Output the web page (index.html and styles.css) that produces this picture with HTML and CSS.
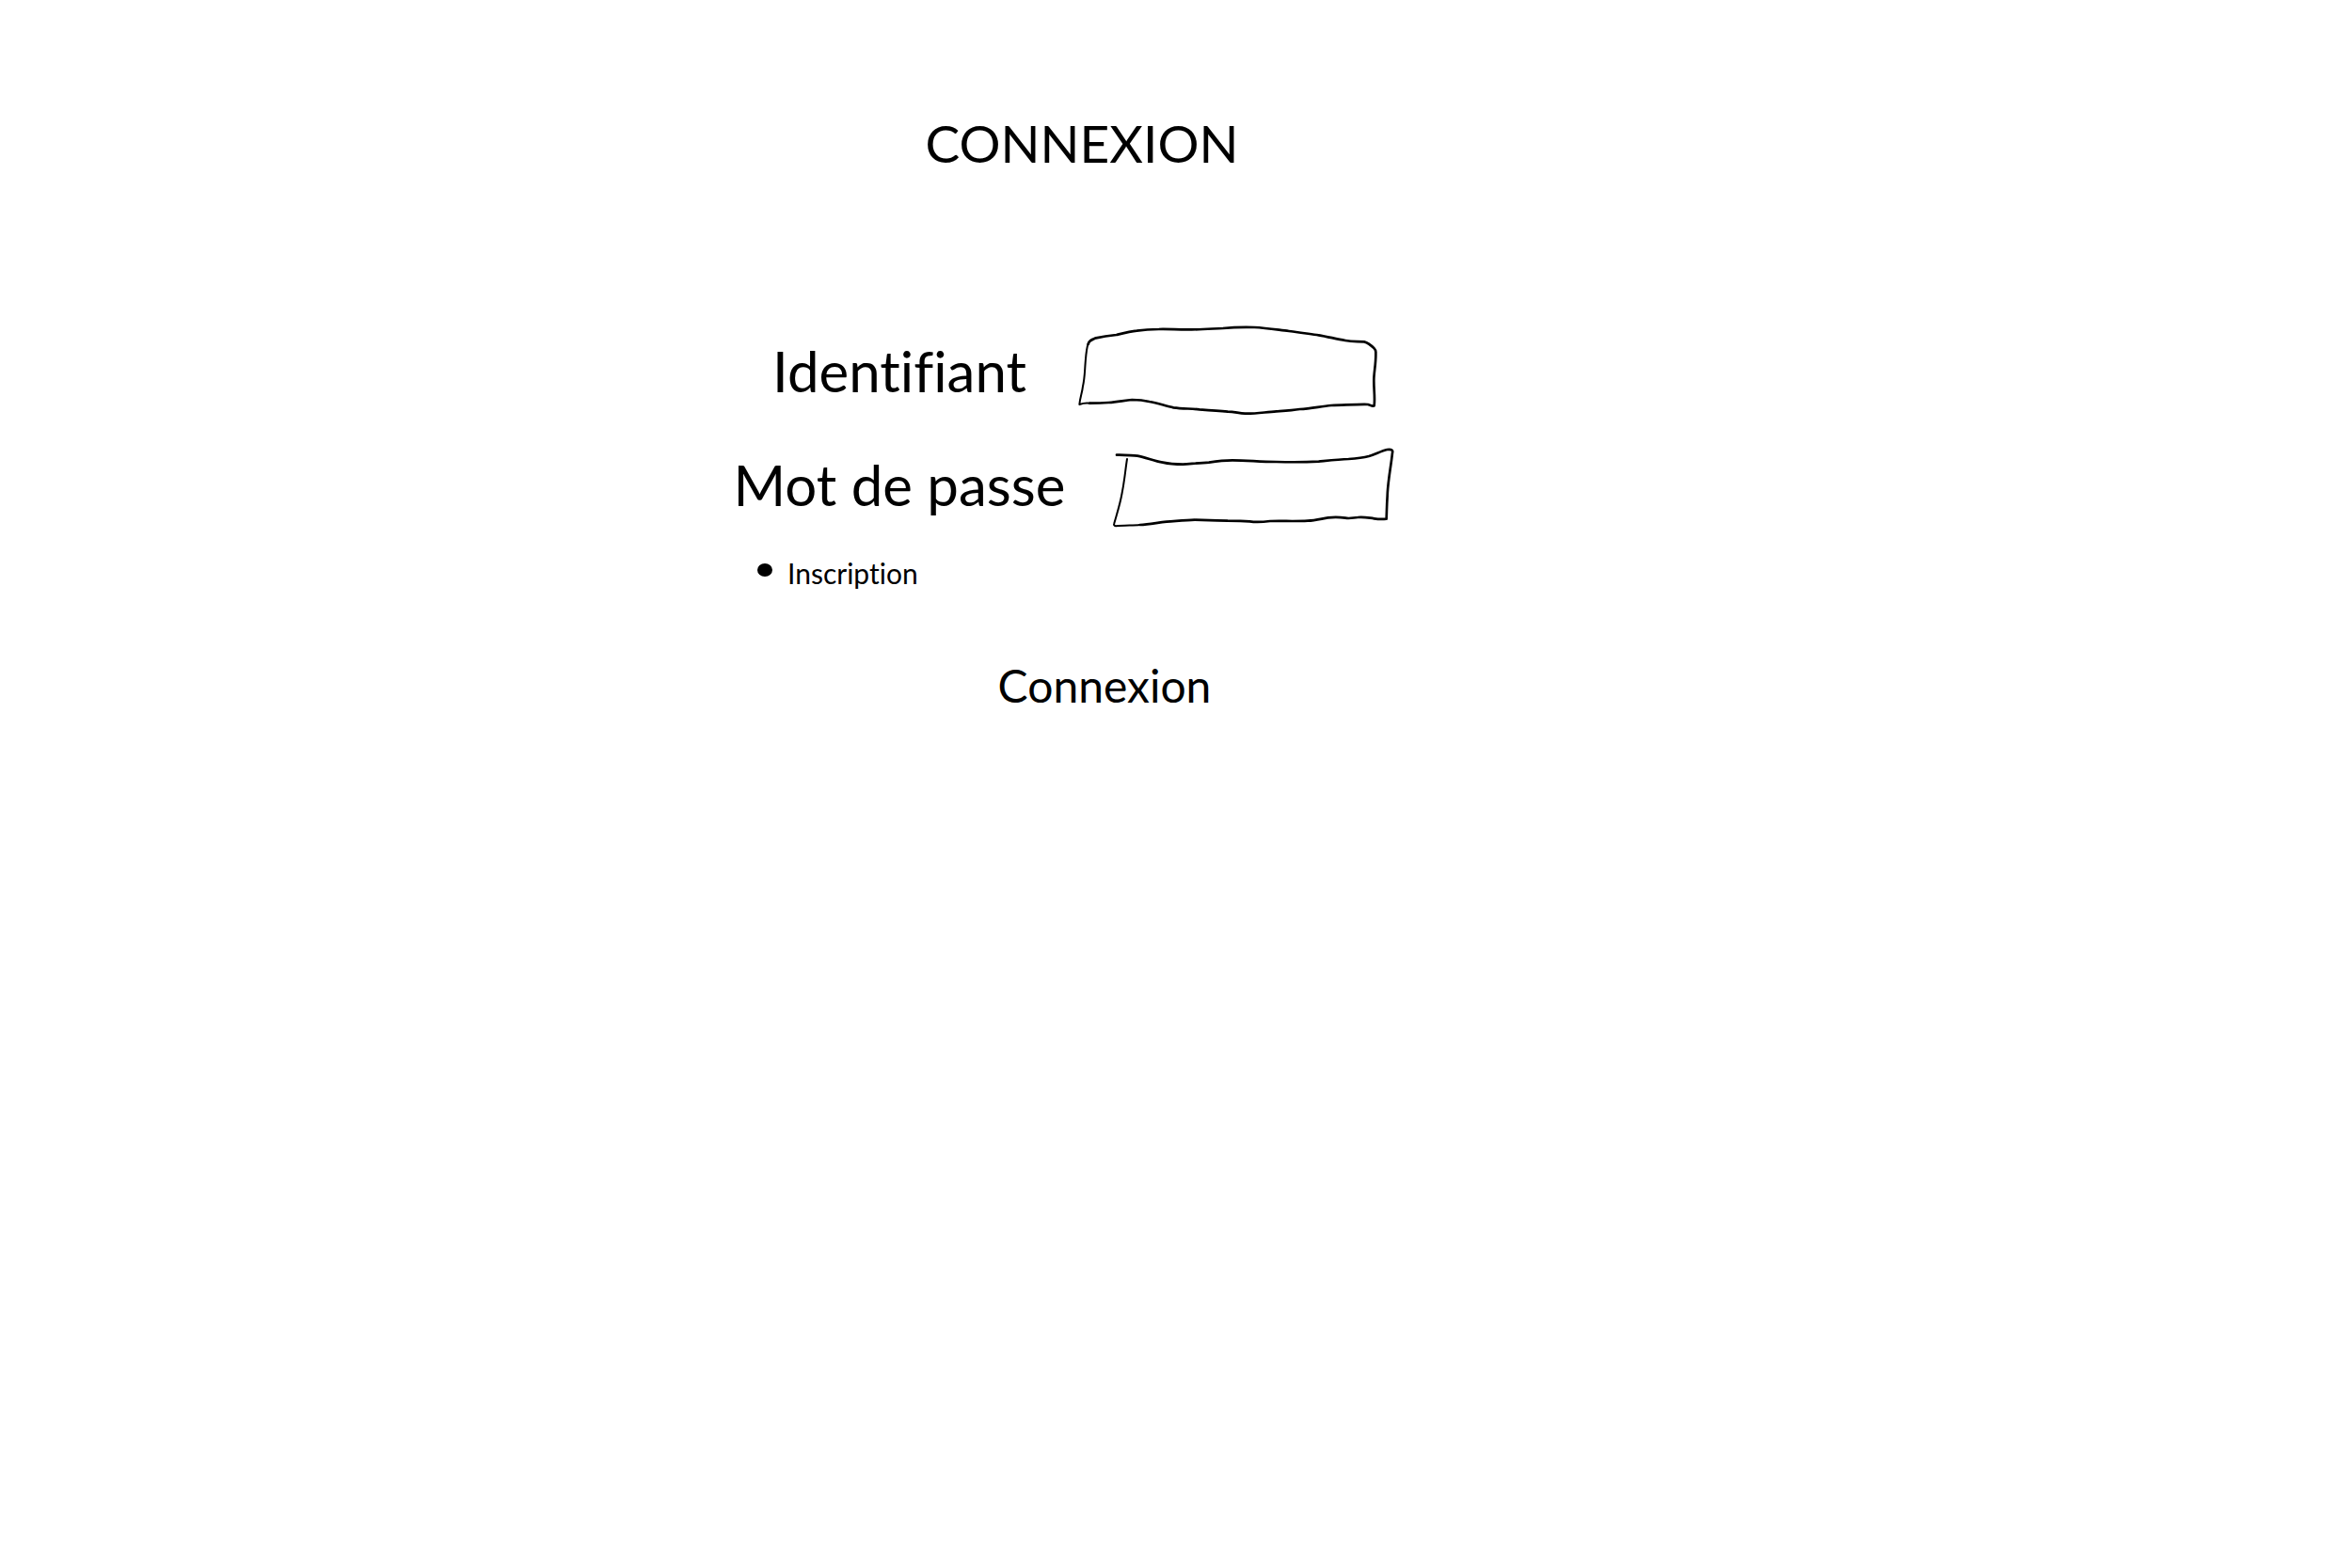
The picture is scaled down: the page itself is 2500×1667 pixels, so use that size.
FILE: index.html
```html
<!DOCTYPE html>
<html lang="fr">
<head>
  <meta charset="utf-8">
  <meta name="viewport" content="width=device-width, initial-scale=1">
  <title>Connexion</title>
  <link rel="stylesheet" href="styles.css">
</head>
<body>
  <main class="login">
    <h1 class="title">CONNEXION</h1>
    <form class="form">
      <div class="row">
        <label class="label" for="identifiant">Identifiant</label>
        <div class="field">
          <svg class="outline" viewBox="21 15 990 330" aria-hidden="true">
            <path stroke-width="8" d="M80 96C82 84 91 82 105 76C125 72 145 69 170 66C195 60 215 55 235 53C260 49 280 48 305 48C340 47 370 50 410 49C450 49 480 46 510 45C540 42 570 41 610 42C650 44 685 50 720 54C760 59 785 63 815 67C845 72 870 79 900 84C925 89 940 86 960 88C972 91 985 102 992 109Q998 115 997 124C998 160 990 190 991 215C991 245 995 265 992 292L987 293L972 288C940 287 900 290 855 291C820 294 790 302 755 303C730 307 710 308 680 310C645 312 615 318 580 317C560 316 545 311 525 311C495 308 465 306 435 304C405 301 380 302 352 298C325 292 300 283 275 279C255 274 240 273 220 273C195 275 175 280 145 282C120 284 100 284 85 284"/>
            <path stroke-width="6" d="M85 284Q68 282 52 288C54 265 61 250 63 230C69 205 69 180 71 155C73 130 74 110 80 94"/>
          </svg>
          <input class="input" id="identifiant" name="identifiant" type="text" autocomplete="username">
        </div>
      </div>
      <div class="row">
        <label class="label" for="motdepasse">Mot de passe</label>
        <div class="field field-inset">
          <svg class="outline" viewBox="81 0 960 306" aria-hidden="true">
            <path stroke-width="8" d="M111 59C135 58 155 61 177 62C205 67 230 79 258 83C280 88 300 89 322 89C350 87 380 84 405 83C430 79 450 76 480 76C530 76 565 81 620 81C665 82 710 82 755 80C785 77 820 73 850 72C880 70 900 67 915 63C935 57 955 46 973 42Q994 39 990 52C985 100 975 145 974 190C972 220 972 240 971 263Q952 265 932 262C910 259 900 256 880 258C865 259 855 263 840 260C820 257 805 257 785 259C765 262 745 268 720 269C680 271 640 269 600 270C575 273 555 274 535 271C510 269 490 269 465 269C430 268 400 267 360 266C330 267 300 270 270 272C240 275 215 281 185 282"/>
            <path stroke-width="6" d="M185 282C160 284 130 283 108 286Q100 284 103 277C112 245 122 215 128 180C136 140 138 110 144 72"/>
          </svg>
          <input class="input" id="motdepasse" name="motdepasse" type="password" autocomplete="current-password">
        </div>
      </div>
      <ul class="links">
        <li class="item"><a class="link" href="#inscription">Inscription</a></li>
      </ul>
      <button class="submit" type="submit">Connexion</button>
    </form>
  </main>
</body>
</html>
```
FILE: styles.css
```css
* {
  box-sizing: border-box;
}

body {
  margin: 0;
  background: #fff;
  color: #000;
  font-family: "Ink Free", Lato, sans-serif;
  font-variant-ligatures: none;
}

.login {
  max-width: 1525px;
  padding: 122px 0 64px 31%;
}

.login,
.form {
  display: flex;
  flex-direction: column;
}

.login {
  width: 61%;
  gap: 157px;
}

.title {
  margin: 0;
  font-size: 55px;
  font-weight: 400;
  line-height: 60px;
  text-align: center;
}

.form {
  gap: 15px;
}

.row {
  display: grid;
  grid-template-columns: 362px 1fr;
  align-items: center;
}

.label {
  font-size: 60px;
  line-height: 72px;
  text-align: center;
  white-space: nowrap;
}

.field {
  position: relative;
  display: flex;
  width: 330px;
  height: 110px;
  padding: 16px 20px 24px;
}

.field-inset {
  width: 320px;
  height: 102px;
  margin-left: 40px;
  padding: 32px 28px 20px;
}

/* Hand-drawn frame around the text box */
.outline {
  position: absolute;
  inset: 0;
  width: 100%;
  height: 100%;
  fill: none;
  stroke: #000;
  stroke-linecap: round;
  stroke-linejoin: round;
  pointer-events: none;
}

.input {
  width: 100%;
  padding: 0;
  border: 0;
  outline: 0;
  background: transparent;
  color: inherit;
  font: inherit;
  font-size: 30px;
}

.links {
  margin: 8px 0 0;
  padding: 0 0 0 30px;
  list-style: none;
}

.item {
  display: flex;
  align-items: center;
  gap: 16px;
}

.item::before {
  content: "";
  width: 16px;
  height: 14px;
  margin-bottom: 6px;
  border-radius: 50%;
  background: #000;
}

.link {
  color: inherit;
  font-size: 30px;
  line-height: 40px;
  text-decoration: none;
}

.submit {
  align-self: center;
  margin: 55px 0 0 48px;
  padding: 0;
  border: 0;
  background: none;
  color: inherit;
  font-family: inherit;
  font-size: 48px;
  line-height: 60px;
  cursor: pointer;
}
```
